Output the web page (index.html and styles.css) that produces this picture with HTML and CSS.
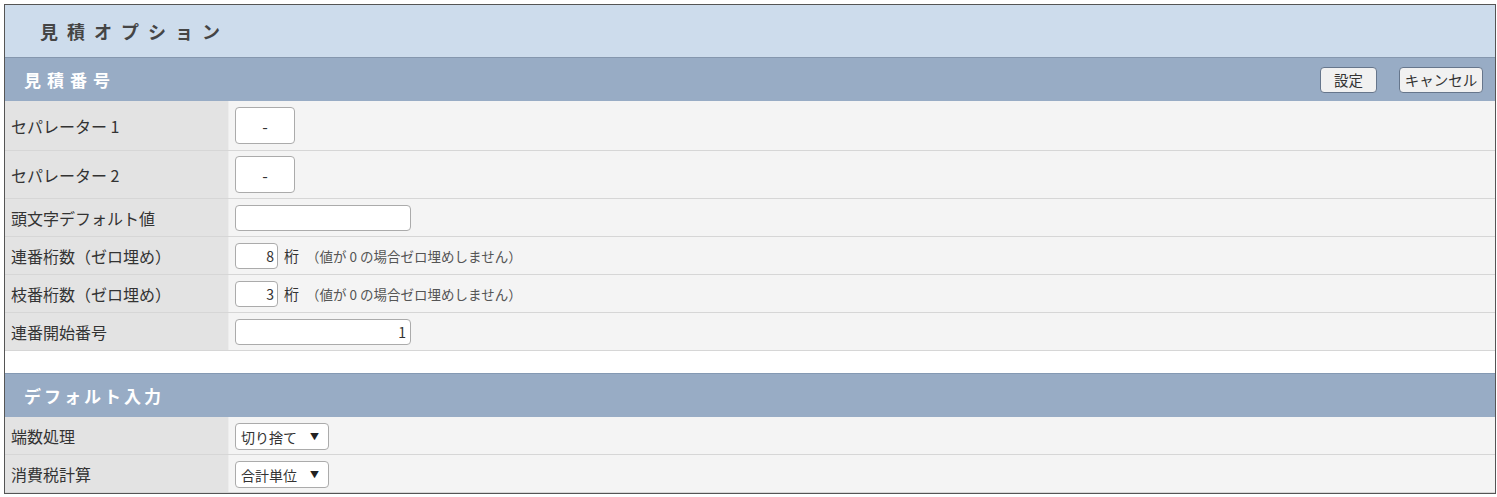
FILE: index.html
```html
<!DOCTYPE html>
<html lang="ja">
<head>
<meta charset="utf-8">
<title>見積オプション</title>
<link rel="stylesheet" href="styles.css">
</head>
<body>
<div class="frame">
  <div class="title">見積オプション</div>

  <div class="section-head">
    <span class="section-title wide">見積番号</span>
    <div class="actions">
      <button class="btn btn-set">設定</button>
      <button class="btn btn-cancel">キャンセル</button>
    </div>
  </div>

  <div class="row row-tall">
    <div class="label">セパレーター 1</div>
    <div class="value"><input class="in-sep" type="text" value="-"></div>
  </div>
  <div class="row row-tall2">
    <div class="label">セパレーター 2</div>
    <div class="value"><input class="in-sep" type="text" value="-"></div>
  </div>
  <div class="row">
    <div class="label">頭文字デフォルト値</div>
    <div class="value"><input class="in-text" type="text" value=""></div>
  </div>
  <div class="row">
    <div class="label">連番桁数（ゼロ埋め）</div>
    <div class="value">
      <input class="in-num" type="text" value="8">
      <span class="unit">桁</span>
      <span class="note">（値が 0 の場合ゼロ埋めしません）</span>
    </div>
  </div>
  <div class="row">
    <div class="label">枝番桁数（ゼロ埋め）</div>
    <div class="value">
      <input class="in-num" type="text" value="3">
      <span class="unit">桁</span>
      <span class="note">（値が 0 の場合ゼロ埋めしません）</span>
    </div>
  </div>
  <div class="row">
    <div class="label">連番開始番号</div>
    <div class="value"><input class="in-text in-right" type="text" value="1"></div>
  </div>

  <div class="gap"></div>

  <div class="section-head section-head2">
    <span class="section-title">デフォルト入力</span>
  </div>

  <div class="row">
    <div class="label">端数処理</div>
    <div class="value"><div class="select"><span>切り捨て</span><span class="arrow">▼</span></div></div>
  </div>
  <div class="row">
    <div class="label">消費税計算</div>
    <div class="value"><div class="select"><span>合計単位</span><span class="arrow">▼</span></div></div>
  </div>
</div>
</body>
</html>
```

FILE: styles.css
```css
* { box-sizing: border-box; }
html, body { margin: 0; padding: 0; background: #ffffff; }
body {
  font-family: "Noto Sans CJK JP", "Noto Sans", "Liberation Sans", sans-serif;
  color: #333333;
}
.frame {
  margin: 4px 0 0 4px;
  width: 1492px;
  height: 490px;
  border: 1px solid #555555;
  background: #ffffff;
  display: flex;
  flex-direction: column;
}
.title {
  height: 53px;
  background: #cddcec;
  border-bottom: 1px solid #8597ae;
  padding-left: 35px;
  display: flex;
  align-items: center;
  font-size: 18px;
  font-weight: bold;
  letter-spacing: 9px;
  color: #454545;
}
.section-head {
  height: 43px;
  background: #98acc5;
  display: flex;
  align-items: center;
  justify-content: space-between;
  padding: 0 12px 0 19px;
}
.section-head2 {
  height: 44px;
  border-top: 1px solid #8499b3;
}
.section-title {
  color: #ffffff;
  font-size: 17px;
  font-weight: bold;
  letter-spacing: 3px;
}
.section-title.wide { letter-spacing: 6px; }
.actions { display: flex; gap: 22px; padding-top: 1px; }
.btn {
  height: 26px;
  background: #f1f1f1;
  border: 1px solid #66768c;
  border-radius: 4px;
  font-family: inherit;
  font-size: 14.5px;
  color: #333333;
  padding: 0;
  line-height: 22px;
}
.btn-set { width: 57px; }
.btn-cancel { width: 84px; }
.row {
  height: 38px;
  display: grid;
  grid-template-columns: 224px 1fr;
  border-bottom: 1px solid #d6d6d6;
}
.row-tall { height: 50px; }
.row-tall2 { height: 48px; }
.label {
  background: #e3e3e3;
  border-right: 1px solid #ededed;
  display: flex;
  align-items: center;
  padding-left: 6px;
  font-size: 16px;
  color: #333333;
}
.value {
  background: #f4f4f4;
  display: flex;
  align-items: center;
  padding-left: 6px;
}
input {
  font-family: inherit;
  color: #333333;
  background: #ffffff;
  border: 1px solid #ababab;
  border-radius: 4px;
  outline: none;
  margin: 0;
}
.in-sep {
  width: 60px;
  height: 37px;
  text-align: center;
  font-size: 16px;
  padding: 0;
}
.in-text {
  width: 176px;
  height: 26px;
  font-size: 14px;
  padding: 0 4px;
}
.in-right { text-align: right; }
.in-num {
  width: 43px;
  height: 26px;
  font-size: 14px;
  text-align: right;
  padding: 0 3px 0 0;
}
.unit {
  font-size: 15px;
  margin-left: 6px;
  color: #333333;
}
.note {
  font-size: 13.5px;
  color: #555555;
  margin-left: 7px;
}
.gap { height: 22px; background: #ffffff; }
.select {
  width: 94px;
  height: 27px;
  background: #ffffff;
  border: 1px solid #ababab;
  border-radius: 4px;
  display: flex;
  align-items: center;
  justify-content: space-between;
  padding: 0 9px 0 5px;
  font-size: 14px;
  color: #333333;
  margin-top: 2px;
}
.arrow { font-size: 9px; color: #222222; }
```
